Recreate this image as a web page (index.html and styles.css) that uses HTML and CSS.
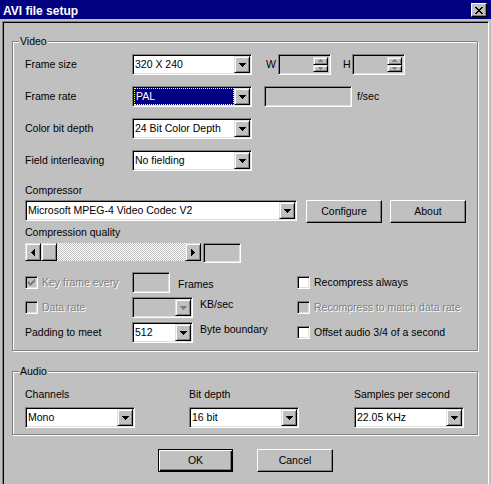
FILE: index.html
```html
<!DOCTYPE html>
<html>
<head>
<meta charset="utf-8">
<title>AVI file setup</title>
<link rel="stylesheet" href="styles.css">
</head>
<body>
<div class="titlebar">
  <span class="title">AVI file setup</span>
  <span class="close"><svg width="8" height="7" viewBox="0 0 8 7"><path d="M0 0h2v1H0zM6 0h2v1H6zM1 1h2v1H1zM5 1h2v1H5zM2 2h4v1H2zM3 3h2v1H3zM2 4h4v1H2zM1 5h2v1H1zM5 5h2v1H5zM0 6h2v1H0zM6 6h2v1H6z"/></svg></span>
</div>
<div class="panel">
  <section class="group video">
    <span class="group-label">Video</span>
    <div class="form-grid">
      <span class="field-label">Frame size</span>
      <div class="combo"><span class="value">320 X 240</span><span class="drop"><svg width="7" height="4" viewBox="0 0 7 4"><path d="M0 0h7v1H0zM1 1h5v1H1zM2 2h3v1H2zM3 3h1v1H3z"/></svg></span></div>
      <div class="dims">
        <span class="dim-w">W</span>
        <div class="spin"><span class="spin-btns"><span class="spin-btn"><svg width="5" height="3" viewBox="0 0 5 3"><path d="M2 0h1v1H2zM1 1h3v1H1zM0 2h5v1H0z"/></svg></span><span class="spin-btn"><svg width="5" height="3" viewBox="0 0 5 3"><path d="M0 0h5v1H0zM1 1h3v1H1zM2 2h1v1H2z"/></svg></span></span></div>
        <span class="dim-h">H</span>
        <div class="spin"><span class="spin-btns"><span class="spin-btn"><svg width="5" height="3" viewBox="0 0 5 3"><path d="M2 0h1v1H2zM1 1h3v1H1zM0 2h5v1H0z"/></svg></span><span class="spin-btn"><svg width="5" height="3" viewBox="0 0 5 3"><path d="M0 0h5v1H0zM1 1h3v1H1zM2 2h1v1H2z"/></svg></span></span></div>
      </div>

      <span class="field-label">Frame rate</span>
      <div class="combo"><span class="value selected">PAL</span><span class="drop"><svg width="7" height="4" viewBox="0 0 7 4"><path d="M0 0h7v1H0zM1 1h5v1H1zM2 2h3v1H2zM3 3h1v1H3z"/></svg></span></div>
      <div class="rate"><div class="field disabled rate-field"></div><span class="unit-fsec">f/sec</span></div>

      <span class="field-label">Color bit depth</span>
      <div class="combo"><span class="value">24 Bit Color Depth</span><span class="drop"><svg width="7" height="4" viewBox="0 0 7 4"><path d="M0 0h7v1H0zM1 1h5v1H1zM2 2h3v1H2zM3 3h1v1H3z"/></svg></span></div>

      <span class="field-label">Field interleaving</span>
      <div class="combo"><span class="value">No fielding</span><span class="drop"><svg width="7" height="4" viewBox="0 0 7 4"><path d="M0 0h7v1H0zM1 1h5v1H1zM2 2h3v1H2zM3 3h1v1H3z"/></svg></span></div>
    </div>

    <div class="caption caption-compressor">Compressor</div>
    <div class="compressor-row">
      <div class="combo combo-compressor"><span class="value">Microsoft MPEG-4 Video Codec V2</span><span class="drop"><svg width="7" height="4" viewBox="0 0 7 4"><path d="M0 0h7v1H0zM1 1h5v1H1zM2 2h3v1H2zM3 3h1v1H3z"/></svg></span></div>
      <button class="btn btn-configure">Configure</button>
      <button class="btn btn-about">About</button>
    </div>

    <div class="caption caption-quality">Compression quality</div>
    <div class="quality-row">
      <div class="scrollbar">
        <span class="sb-btn"><svg width="4" height="7" viewBox="0 0 4 7"><path d="M3 0h1v7H3zM2 1h1v5H2zM1 2h1v3H1zM0 3h1v1H0z"/></svg></span>
        <span class="sb-thumb"></span>
        <span class="sb-track"></span>
        <span class="sb-btn"><svg width="4" height="7" viewBox="0 0 4 7"><path d="M0 0h1v7H0zM1 1h1v5H1zM2 2h1v3H2zM3 3h1v1H3z"/></svg></span>
      </div>
      <div class="field disabled quality-field"></div>
    </div>

    <div class="options-grid">
      <span class="check disabled"><span class="box disabled"><svg width="7" height="7" viewBox="0 0 7 7"><path d="M6 0h1v1H6zM5 1h2v1H5zM0 2h1v1H0zM4 2h3v1H4zM0 3h2v1H0zM3 3h3v1H3zM0 4h5v1H0zM1 5h3v1H1zM2 6h1v1H2z"/></svg></span>Key frame every</span>
      <div class="ctl"><div class="field disabled keyframe-field"></div><span class="unit unit-frames">Frames</span></div>
      <span class="check"><span class="box"></span>Recompress always</span>

      <span class="check disabled"><span class="box disabled"></span>Data rate</span>
      <div class="ctl"><div class="combo combo-small combo-disabled"><span class="value"></span><span class="drop"><svg width="7" height="4" viewBox="0 0 7 4"><path d="M0 0h7v1H0zM1 1h5v1H1zM2 2h3v1H2zM3 3h1v1H3z"/></svg></span></div><span class="unit">KB/sec</span></div>
      <span class="check disabled"><span class="box disabled"></span>Recompress to match data rate</span>

      <span class="field-label">Padding to meet</span>
      <div class="ctl"><div class="combo combo-small"><span class="value">512</span><span class="drop"><svg width="7" height="4" viewBox="0 0 7 4"><path d="M0 0h7v1H0zM1 1h5v1H1zM2 2h3v1H2zM3 3h1v1H3z"/></svg></span></div><span class="unit">Byte boundary</span></div>
      <span class="check"><span class="box"></span>Offset audio 3/4 of a second</span>
    </div>
  </section>

  <section class="group audio">
    <span class="group-label">Audio</span>
    <div class="audio-grid">
      <span>Channels</span>
      <span>Bit depth</span>
      <span>Samples per second</span>
      <div class="combo combo-audio"><span class="value">Mono</span><span class="drop"><svg width="7" height="4" viewBox="0 0 7 4"><path d="M0 0h7v1H0zM1 1h5v1H1zM2 2h3v1H2zM3 3h1v1H3z"/></svg></span></div>
      <div class="combo combo-audio"><span class="value">16 bit</span><span class="drop"><svg width="7" height="4" viewBox="0 0 7 4"><path d="M0 0h7v1H0zM1 1h5v1H1zM2 2h3v1H2zM3 3h1v1H3z"/></svg></span></div>
      <div class="combo combo-audio"><span class="value">22.05 KHz</span><span class="drop"><svg width="7" height="4" viewBox="0 0 7 4"><path d="M0 0h7v1H0zM1 1h5v1H1zM2 2h3v1H2zM3 3h1v1H3z"/></svg></span></div>
    </div>
  </section>

  <div class="actions">
    <button class="btn btn-default">OK</button>
    <button class="btn btn-cancel">Cancel</button>
  </div>
</div>
</body>
</html>
```
FILE: styles.css
```css
html, body {
  margin: 0;
  overflow: hidden;
}
body {
  width: 491px;
  height: 484px;
  background: #c0c0c0;
  color: #000;
  font-family: "Liberation Sans", Arial, sans-serif;
  font-size: 10.5px;
  line-height: 13px;
}
svg { display: block; }

/* title bar */
.titlebar {
  display: flex;
  justify-content: space-between;
  align-items: flex-start;
  height: 19px;
  background: #000080;
  color: #fff;
}
.title {
  font-weight: bold;
  font-size: 12px;
  line-height: 16px;
  padding: 3px 0 0 3px;
}
.close {
  width: 16px;
  height: 14px;
  margin: 3px 4px 0 0;
  box-sizing: border-box;
  background: #c0c0c0;
  border: 1px solid;
  border-color: #fff #000 #000 #fff;
  box-shadow: inset -1px -1px #808080;
  display: flex;
  align-items: center;
  justify-content: center;
  fill: #000;
}

/* client panel */
.panel {
  margin: 2px 2px 0 2px;
  height: 480px;
  box-sizing: border-box;
  border: 1px solid;
  border-color: #808080 #fff #fff #808080;
  box-shadow: inset 1px 1px #000;
}

/* group boxes */
.group {
  position: relative;
  width: 466px;
  margin-left: 9px;
  box-sizing: border-box;
  border: 1px solid #808080;
  box-shadow: inset 1px 1px #fff, 1px 1px #fff;
}
.group-label {
  position: absolute;
  left: 6px;
  top: -7px;
  padding: 0 1px;
  background: #c0c0c0;
}
.video {
  margin-top: 19px;
  padding: 12px 0 7px 12px;
}
.audio {
  margin-top: 20px;
  padding: 16px 0 6px 12px;
}

/* sunken fields */
.field, .combo, .spin, .box {
  box-sizing: border-box;
  border: 1px solid;
  border-color: #808080 #fff #fff #808080;
  box-shadow: inset 1px 1px #000, inset -1px -1px #dfdfdf;
  background: #fff;
}
.field.disabled, .spin, .box.disabled, .combo-disabled {
  background: #c0c0c0;
}

/* combo */
.combo {
  display: flex;
  width: 120px;
  height: 21px;
  padding: 1px;
}
.combo .value {
  flex: 1;
  min-width: 0;
  border: 1px solid transparent;
  line-height: 15px;
  white-space: nowrap;
  overflow: hidden;
}
.combo .value.selected {
  background: #000080;
  color: #fff;
  border: 1px dotted #ffff80;
  padding-left: 1px;
}
.drop, .sb-btn, .sb-thumb, .spin-btn {
  box-sizing: border-box;
  background: #c0c0c0;
  border: 1px solid;
  border-color: #dfdfdf #000 #000 #dfdfdf;
  box-shadow: inset 1px 1px #fff, inset -1px -1px #808080;
  display: flex;
  align-items: center;
  justify-content: center;
}
.drop {
  width: 16px;
  height: 17px;
  fill: #000;
  padding-left: 1px;
}
.combo-disabled .drop { fill: #808080; }

/* video form */
.form-grid {
  display: grid;
  grid-template-columns: 107px 120px 1fr;
  grid-auto-rows: 21px;
  row-gap: 11px;
  align-items: center;
}
.form-grid .field-label { grid-column: 1; }
.dims {
  display: flex;
  align-items: center;
  margin-left: 14px;
}
.dim-w { width: 12px; }
.dim-h { width: 9px; margin-left: 12px; }
.spin {
  width: 53px;
  height: 21px;
  padding: 2px;
  display: flex;
  justify-content: flex-end;
}
.spin-btns {
  display: flex;
  flex-direction: column;
  width: 15px;
}
.spin-btn {
  flex: 1;
  fill: #808080;
}
.rate {
  display: flex;
  align-items: center;
  margin-left: 12px;
}
.rate-field {
  width: 88px;
  height: 21px;
}
.unit-fsec { margin-left: 5px; }

.caption-compressor { margin-top: 13px; }
.compressor-row {
  display: flex;
  align-items: flex-start;
  margin-top: 3px;
}
.combo-compressor { width: 272px; }

.btn {
  box-sizing: border-box;
  height: 23px;
  width: 76px;
  padding: 0;
  margin: 0;
  font: inherit;
  color: #000;
  background: #c0c0c0;
  border: 1px solid;
  border-color: #fff #000 #000 #fff;
  box-shadow: inset -1px -1px #808080;
  display: flex;
  align-items: center;
  justify-content: center;
}
.btn-configure { margin-left: 9px; }
.btn-about { margin-left: 8px; }

.caption-quality { margin-top: 3px; }
.quality-row {
  display: flex;
  align-items: flex-start;
  margin-top: 4px;
}
.scrollbar {
  display: flex;
  width: 176px;
  height: 18px;
}
.sb-btn {
  width: 16px;
  fill: #000;
}
.sb-thumb { width: 16px; }
.sb-track {
  flex: 1;
  background: repeating-conic-gradient(#fff 0% 25%, #c0c0c0 0% 50%) 0 0 / 2px 2px;
}
.quality-field {
  width: 38px;
  height: 20px;
  margin-left: 2px;
}

/* options */
.options-grid {
  display: grid;
  grid-template-columns: 107px 165px 1fr;
  grid-auto-rows: 21px;
  row-gap: 4px;
  margin-top: 9px;
  align-items: center;
}
.check {
  display: flex;
  align-items: center;
  gap: 4px;
  white-space: nowrap;
}
.check.disabled {
  color: #808080;
  text-shadow: 1px 1px 0 #fff;
}
.box {
  width: 13px;
  height: 13px;
  flex: none;
  padding: 2px;
  fill: #808080;
}
.ctl {
  display: flex;
  height: 21px;
  align-items: flex-start;
}
.keyframe-field {
  width: 38px;
  height: 21px;
}
.combo-small { width: 61px; }
.unit {
  margin-left: 7px;
  margin-top: 1px;
  white-space: nowrap;
}
.unit-frames {
  margin-left: 8px;
  margin-top: 6px;
}

/* audio */
.audio-grid {
  display: grid;
  grid-template-columns: 164px 165px 110px;
  grid-template-rows: 13px 21px;
  row-gap: 6px;
}
.combo-audio { width: 110px; }

/* actions */
.actions {
  display: flex;
  justify-content: center;
  gap: 24px;
  margin-top: 14px;
}
.btn-default {
  width: 75px;
  border-color: #000;
  box-shadow: inset 1px 1px #fff, inset -1px -1px #000, inset -2px -2px #808080;
}
```
